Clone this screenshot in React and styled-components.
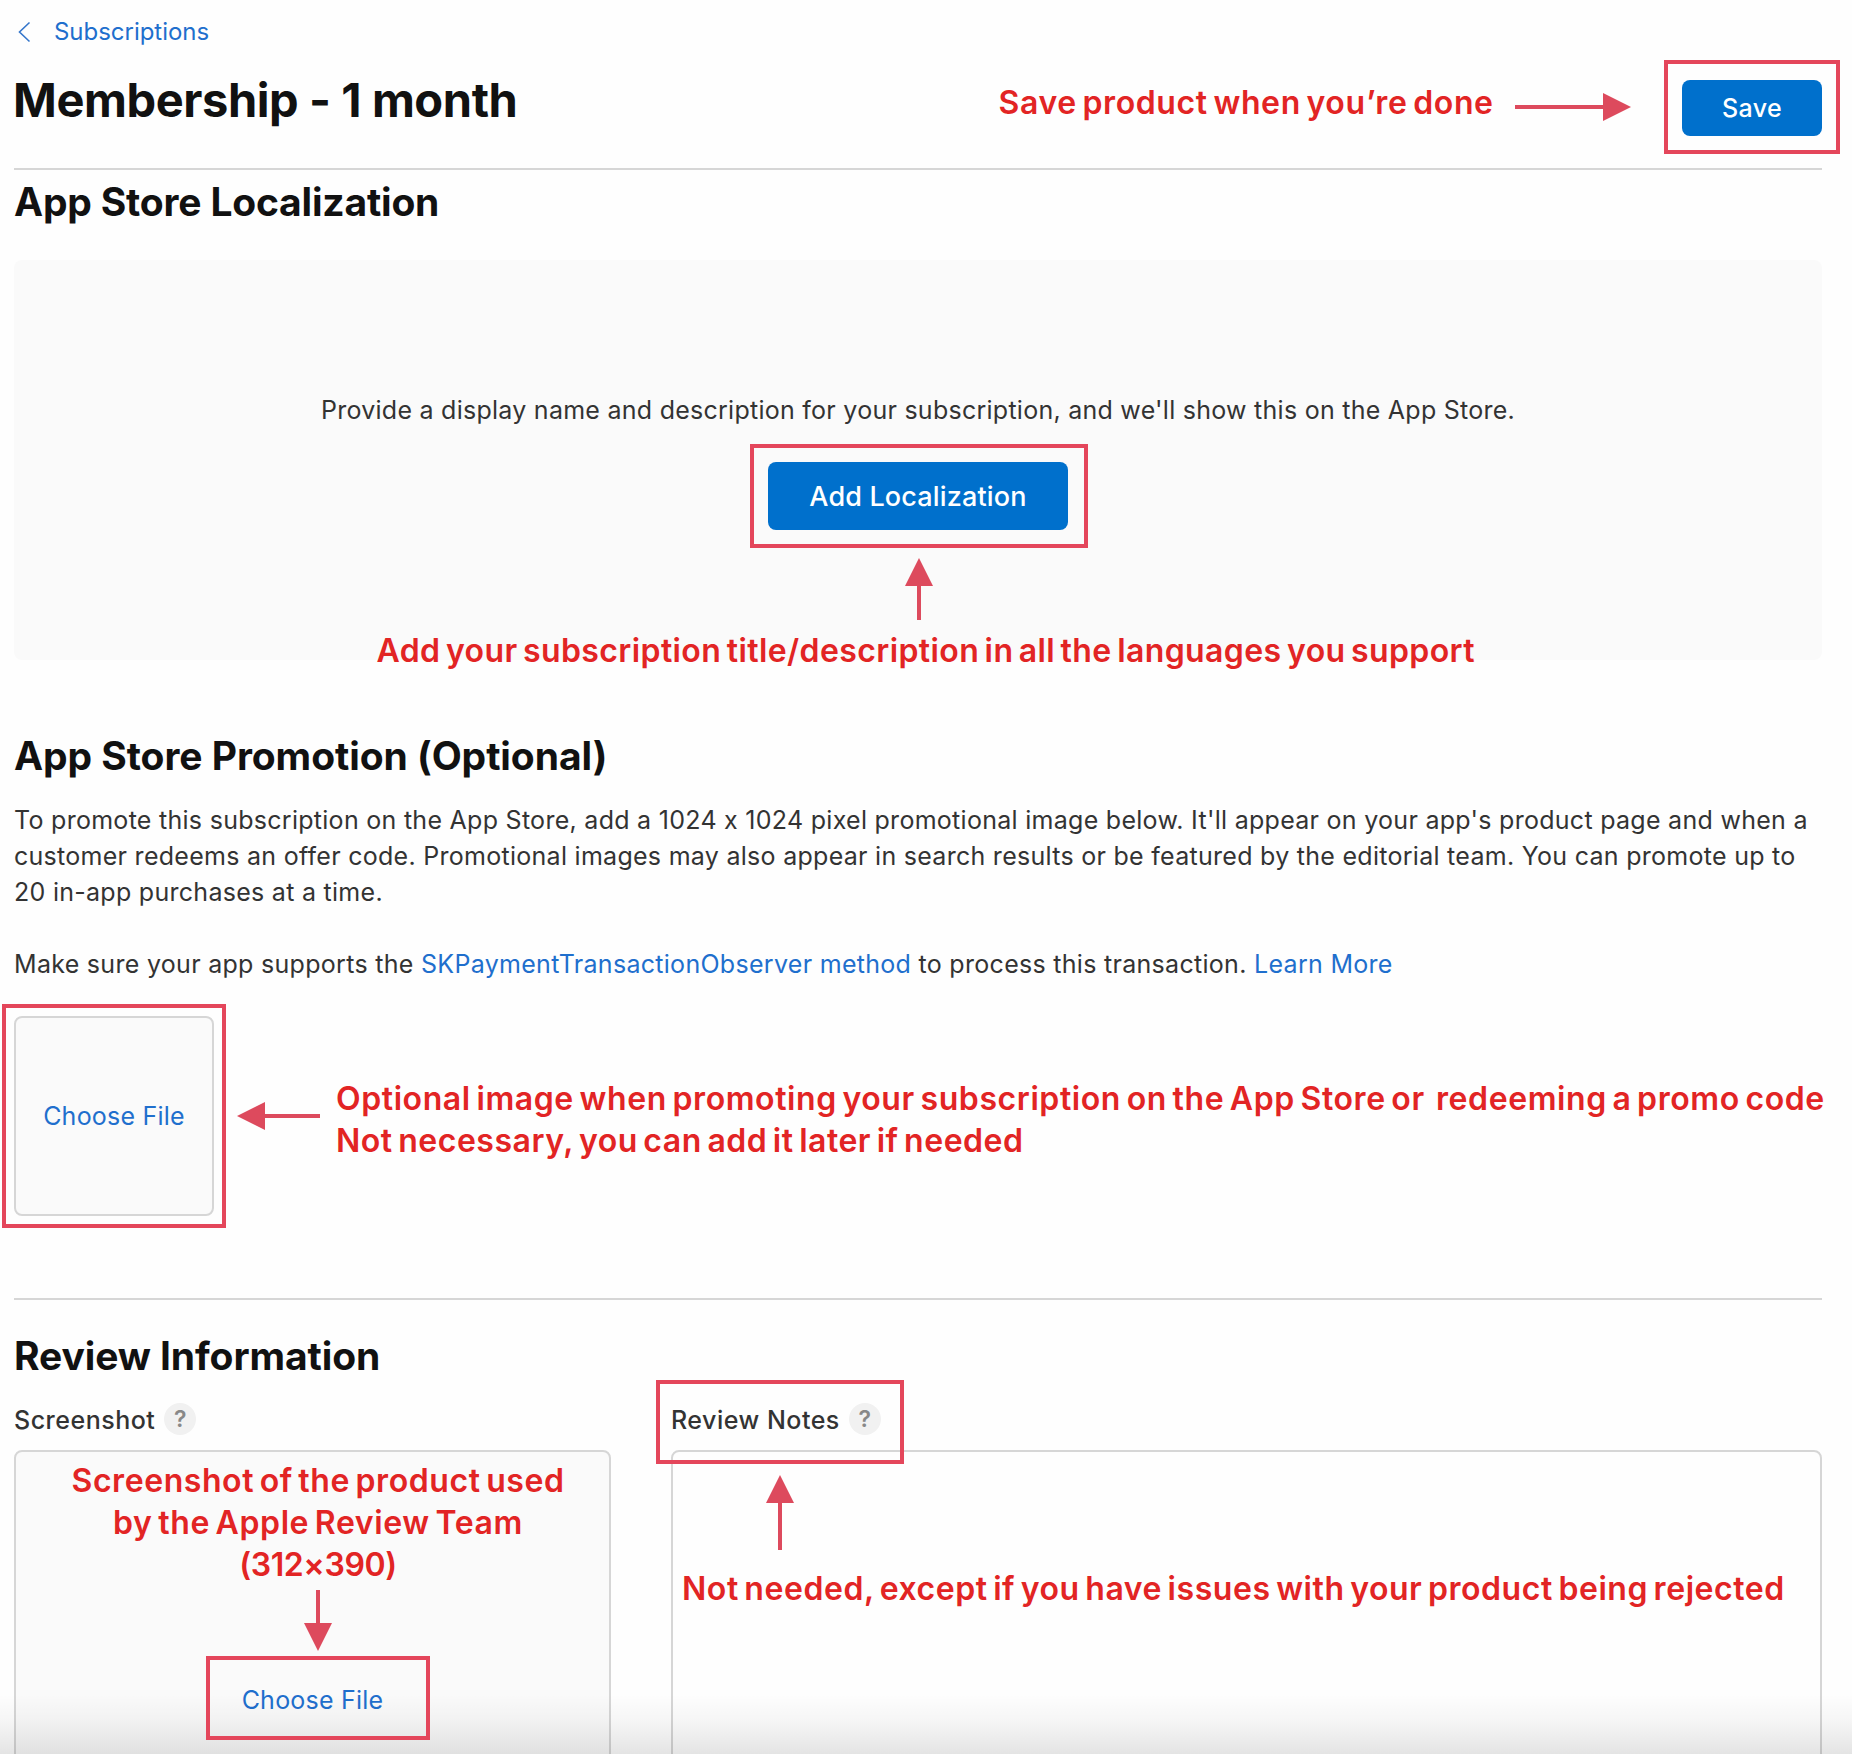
import React from "react";
import styled, { createGlobalStyle } from "styled-components";

const GlobalStyle = createGlobalStyle`
  *, *::before, *::after { box-sizing: border-box; }
  body {
    margin: 0;
    background: #fefefe;
    font-family: "Inter", "Liberation Sans", sans-serif;
    color: #333333;
  }
`;

const Page = styled.div`
  position: relative;
  width: 1852px;
  height: 1754px;
  padding: 0 30px 0 14px;
  overflow: hidden;
`;

const Breadcrumb = styled.nav`
  display: flex;
  align-items: center;
  gap: 23px;
  height: 62px;
  padding: 2px 0 0 4px;
`;

const BackIcon = styled.svg`
  width: 13px;
  height: 22px;
  fill: none;
  stroke: #3576cb;
  stroke-width: 1.6;
`;

const Link = styled.a`
  color: #1f6fcd;
  font-size: ${(p) => p.$size ?? "25px"};
  line-height: 36px;
  letter-spacing: ${(p) => p.$tracking ?? "0.22px"};
  text-decoration: none;
  cursor: pointer;
`;

const Header = styled.header`
  display: flex;
  align-items: flex-start;
  justify-content: space-between;
  height: 108px;
  padding-top: 18px;
  border-bottom: 2px solid #d6d6d6;
`;

const Title = styled.h1`
  margin: 0 0 0 -1px;
  color: #111111;
  font-size: 47px;
  font-weight: 700;
  line-height: 40px;
  letter-spacing: -0.41px;
`;

const Button = styled.button`
  display: flex;
  align-items: center;
  justify-content: center;
  width: ${(p) => (p.$large ? 300 : 140)}px;
  height: ${(p) => (p.$large ? 68 : 56)}px;
  padding: 0;
  border: 0;
  border-radius: 8px;
  background: #0070cc;
  color: #ffffff;
  font-family: inherit;
  font-size: ${(p) => (p.$large ? 27 : 25)}px;
  font-weight: 500;
  letter-spacing: ${(p) => (p.$large ? 0.16 : 0.35)}px;
`;

const Heading = styled.h2`
  margin: 0;
  color: #111111;
  font-size: 39px;
  font-weight: 700;
  line-height: 64px;
  letter-spacing: ${(p) => p.$tracking ?? "0"};
`;

const EmptyPanel = styled.div`
  display: flex;
  flex-direction: column;
  align-items: center;
  gap: 34px;
  height: 400px;
  margin: 26px 0 64px;
  padding-top: 132px;
  border-radius: 8px;
  background: #fafafa;
`;

const Text = styled.p`
  margin: ${(p) => p.$margin ?? "0"};
  font-size: 25px;
  line-height: 36px;
  letter-spacing: ${(p) => p.$tracking ?? "0.28px"};
`;

const Dropzone = styled.div`
  display: flex;
  align-items: center;
  justify-content: center;
  width: ${(p) => p.$width};
  height: ${(p) => p.$height};
  border: 2px solid #d6d6d6;
  border-radius: 8px;
  background: #fafafa;
`;

const Divider = styled.hr`
  height: 2px;
  margin: 82px 0 24px;
  border: 0;
  background: #d6d6d6;
`;

const ReviewGrid = styled.div`
  display: grid;
  grid-template-columns: 597px 1151px;
  gap: 60px;
  margin-top: 15px;
`;

const Field = styled.div`
  display: flex;
  flex-direction: column;
  gap: 15px;
`;

const FieldLabel = styled.div`
  display: flex;
  align-items: center;
  gap: 9px;
  height: 32px;
  color: #333333;
  font-size: 25px;
  font-weight: 500;
  letter-spacing: 0.5px;
`;

const LabelText = styled.span`
  padding-top: 2px;
  line-height: 34px;
`;

const Help = styled.span`
  display: flex;
  align-items: center;
  justify-content: center;
  width: 32px;
  height: 32px;
  border-radius: 50%;
  background: #f1f1f1;
  color: #888888;
  font-size: 23px;
  font-weight: 600;
  letter-spacing: 0;
`;

const NotesInput = styled.div`
  height: 500px;
  border: 2px solid #d6d6d6;
  border-radius: 8px;
`;

const BottomShade = styled.div`
  position: absolute;
  left: 0;
  right: 0;
  bottom: 0;
  height: 60px;
  background: linear-gradient(rgba(0, 0, 0, 0), rgba(0, 0, 0, 0.03) 42%, rgba(0, 0, 0, 0.1));
`;

const Outline = styled.div`
  position: absolute;
  left: ${(p) => p.$x}px;
  top: ${(p) => p.$y}px;
  width: ${(p) => p.$w}px;
  height: ${(p) => p.$h}px;
  border: 4px solid #e4465b;
`;

const Callout = styled.div`
  position: absolute;
  left: ${(p) => p.$x}px;
  top: ${(p) => p.$y}px;
  color: #e22424;
  font-size: 32px;
  font-weight: 600;
  line-height: 42px;
  word-spacing: -3px;
  white-space: pre;
  text-align: center;
`;

const Line = styled.div`
  text-align: ${(p) => p.$align ?? "center"};
  letter-spacing: ${(p) => p.$tracking}px;
`;

const ArrowSvg = styled.svg`
  position: absolute;
  left: ${(p) => p.$x}px;
  top: ${(p) => p.$y}px;
  fill: #dd4a5d;
`;

const ROTATION = { up: 0, right: 90, down: 180, left: 270 };

function Arrow({ x, y, length, direction }) {
  const vertical = direction === "up" || direction === "down";
  const w = vertical ? 28 : length;
  const h = vertical ? length : 28;
  return (
    <ArrowSvg $x={x} $y={y} width={w} height={h} viewBox={`${-w / 2} ${-h / 2} ${w} ${h}`}>
      <g transform={`rotate(${ROTATION[direction]})`}>
        <polygon points={`0,${-length / 2} 14,${-length / 2 + 28} -14,${-length / 2 + 28}`} />
        <rect x="-2" y={-length / 2 + 27} width="4" height={length - 27} />
      </g>
    </ArrowSvg>
  );
}

export default function App() {
  return (
    <>
      <GlobalStyle />
      <Page>
        <Breadcrumb>
          <BackIcon viewBox="0 0 13 22">
            <path d="M11.5 1.5 L1.5 11 L11.5 20.5" />
          </BackIcon>
          <Link $size="24px" $tracking="-0.03px">Subscriptions</Link>
        </Breadcrumb>

        <Header>
          <Title>Membership - 1 month</Title>
          <Button>Save</Button>
        </Header>

        <section>
          <Heading $tracking="-0.19px">App Store Localization</Heading>
          <EmptyPanel>
            <Text $tracking="0.26px">
              Provide a display name and description for your subscription, and we'll show this on the App Store.
            </Text>
            <Button $large>Add Localization</Button>
          </EmptyPanel>
        </section>

        <section>
          <Heading $tracking="-0.06px">App Store Promotion (Optional)</Heading>
          <Text $margin="14px 0 36px">
            To promote this subscription on the App Store, add a 1024 x 1024 pixel promotional image below. It'll
            appear on your app's product page and when a customer redeems an offer code. Promotional images may also
            appear in search results or be featured by the editorial team. You can promote up to 20 in-app purchases
            at a time.
          </Text>
          <Text $margin="0 0 34px" $tracking="0.295px">
            Make sure your app supports the <Link $tracking="0.295px">SKPaymentTransactionObserver method</Link> to
            process this transaction. <Link $tracking="0.295px">Learn More</Link>
          </Text>
          <Dropzone $width="200px" $height="200px">
            <Link>Choose File</Link>
          </Dropzone>
        </section>

        <Divider />

        <section>
          <Heading $tracking="-0.1px">Review Information</Heading>
          <ReviewGrid>
            <Field>
              <FieldLabel>
                <LabelText>Screenshot</LabelText>
                <Help>?</Help>
              </FieldLabel>
              <Dropzone $width="100%" $height="500px">
                <Link>Choose File</Link>
              </Dropzone>
            </Field>
            <Field>
              <FieldLabel>
                <LabelText>Review Notes</LabelText>
                <Help>?</Help>
              </FieldLabel>
              <NotesInput />
            </Field>
          </ReviewGrid>
        </section>

        <BottomShade />

        <Callout $x={998.5} $y={82}>
          <Line $tracking={0.62}>Save product when you’re done</Line>
        </Callout>
        <Arrow x={1515} y={93} length={116} direction="right" />
        <Outline $x={1664} $y={60} $w={176} $h={94} />

        <Outline $x={750} $y={444} $w={338} $h={104} />
        <Arrow x={905} y={558} length={62} direction="up" />
        <Callout $x={376.5} $y={630}>
          <Line $tracking={0.4}>Add your subscription title/description in all the languages you support</Line>
        </Callout>

        <Outline $x={2} $y={1004} $w={224} $h={224} />
        <Arrow x={237} y={1102} length={83} direction="left" />
        <Callout $x={336} $y={1078}>
          <Line $align="left" $tracking={0.59}>
            {"Optional image when promoting your subscription on the App Store or  redeeming a promo code"}
          </Line>
          <Line $align="left" $tracking={0.52}>Not necessary, you can add it later if needed</Line>
        </Callout>

        <Callout $x={71.5} $y={1460}>
          <Line $tracking={0.57}>Screenshot of the product used</Line>
          <Line $tracking={0.61}>by the Apple Review Team</Line>
          <Line $tracking={-0.4}>(312×390)</Line>
        </Callout>
        <Arrow x={304} y={1590} length={61} direction="down" />
        <Outline $x={206} $y={1656} $w={224} $h={84} />

        <Outline $x={656} $y={1380} $w={248} $h={84} />
        <Arrow x={766} y={1475} length={75} direction="up" />
        <Callout $x={682} $y={1568}>
          <Line $tracking={0.55}>Not needed, except if you have issues with your product being rejected</Line>
        </Callout>
      </Page>
    </>
  );
}
